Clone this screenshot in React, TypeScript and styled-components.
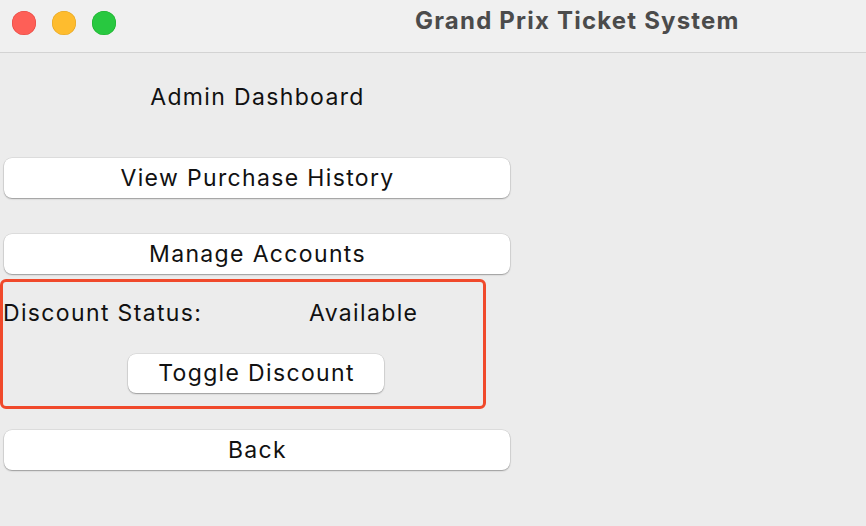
import React from 'react'
import styled, { createGlobalStyle } from 'styled-components'

const GlobalStyle = createGlobalStyle`
    html, body {
        margin: 0;
        padding: 0;
        background: #ececec;
        font-family: Inter, "Liberation Sans", Arial, sans-serif;
    }
`;

const Window = styled.div`
    width: 866px;
    height: 526px;
    display: flex;
    flex-direction: column;
    background: #ececec;
    overflow: hidden;
`;

const TitleBar = styled.div`
    height: 52px;
    flex-shrink: 0;
    display: flex;
    align-items: center;
    background: #f0f0f0;
    border-bottom: 1px solid #d3d3d3;
`;

const Lights = styled.div`
    display: flex;
    gap: 16px;
    padding-left: 12px;
    margin-top: -6px;
`;

const Light = styled.span<{ $color: string; $edge: string }>`
    width: 24px;
    height: 24px;
    border-radius: 50%;
    background: ${(p) => p.$color};
    box-shadow: inset 0 0 0 0.5px ${(p) => p.$edge};
`;

const WindowTitle = styled.div`
    margin-left: 299px;
    margin-top: -12px;
    font-size: 24px;
    font-weight: 700;
    color: #4b4b4b;
    letter-spacing: 1.2px;
`;

const Body = styled.div`
    width: 514px;
    display: flex;
    flex-direction: column;
`;

const Heading = styled.div`
    margin-top: 29px;
    height: 30px;
    line-height: 30px;
    text-align: center;
    font-size: 23px;
    letter-spacing: 1.35px;
    color: #111;
    padding-left: 1px;
`;

const Button = styled.button<{ $top: number }>`
    margin: ${(p) => p.$top}px 4px 0 4px;
    height: 40px;
    width: 506px;
    border: none;
    border-radius: 8px;
    background: #ffffff;
    box-shadow: 0 0 0 0.5px rgba(0, 0, 0, 0.12), 0 1px 1.5px rgba(0, 0, 0, 0.3);
    font-family: inherit;
    font-size: 23px;
    letter-spacing: 1.35px;
    color: #111;
    padding: 0 0 1px 1px;
    cursor: default;
`;

const DiscountBox = styled.div`
    margin-top: 5px;
    width: 486px;
    height: 130px;
    box-sizing: border-box;
    border: 3px solid #f0492b;
    border-radius: 6px;
    padding-top: 16px;
    display: flex;
    flex-direction: column;
`;

const StatusRow = styled.div`
    display: grid;
    grid-template-columns: 306px auto;
    height: 30px;
    line-height: 30px;
    font-size: 23px;
    letter-spacing: 1.35px;
    color: #111;
`;

const ToggleButton = styled(Button)`
    width: 256px;
    height: 39px;
    margin-left: 125px;
`;

export default function App() {
    return (
        <Window>
            <GlobalStyle />
            <TitleBar>
                <Lights>
                    <Light $color="#fe5f57" $edge="#e0443e" />
                    <Light $color="#febc2e" $edge="#dea123" />
                    <Light $color="#28c840" $edge="#1aab29" />
                </Lights>
                <WindowTitle>Grand Prix Ticket System</WindowTitle>
            </TitleBar>
            <Body>
                <Heading>Admin Dashboard</Heading>
                <Button $top={46}>View Purchase History</Button>
                <Button $top={36}>Manage Accounts</Button>
                <DiscountBox>
                    <StatusRow>
                        <span>Discount Status:</span>
                        <span>Available</span>
                    </StatusRow>
                    <ToggleButton $top={26}>Toggle Discount</ToggleButton>
                </DiscountBox>
                <Button $top={21}>Back</Button>
            </Body>
        </Window>
    )
}
